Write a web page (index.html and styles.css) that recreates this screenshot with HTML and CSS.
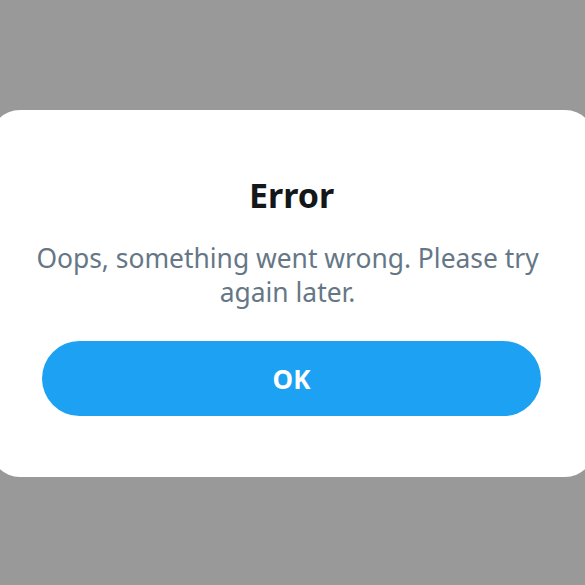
FILE: index.html
```html
<!DOCTYPE html>
<html lang="en">
<head>
  <meta charset="UTF-8">
  <meta name="viewport" content="width=device-width, initial-scale=1.0">
  <title>Error</title>
  <link rel="stylesheet" href="styles.css">
</head>
<body>
  <div class="overlay">
    <div class="dialog">
      <h1 class="title">Error</h1>
      <p class="message">Oops, something went wrong. Please try again later.</p>
      <button class="okbtn">OK</button>
    </div>
  </div>
</body>
</html>
```

FILE: styles.css
```css
body {
  margin: 0;
  background-color: #999999;
  font-family: "Noto Sans", "Open Sans", sans-serif;
}
.overlay {
  height: 585px;
  display: flex;
  justify-content: center;
  align-items: flex-start;
  overflow: hidden;
}
.dialog {
  flex: none;
  width: 605px;
  height: 367px;
  margin-top: 110px;
  box-sizing: border-box;
  padding: 60px 54px 0 52px;
  background-color: #ffffff;
  border-radius: 30px;
  display: flex;
  flex-direction: column;
  align-items: center;
}
.title {
  margin: 0;
  font-size: 34px;
  line-height: 50px;
  font-weight: 700;
  color: #14171a;
}
.message {
  margin: 21px -10px 0 -18px;
  font-size: 26.4px;
  line-height: 34px;
  text-align: center;
  color: #657786;
}
.okbtn {
  margin-top: 32px;
  width: 100%;
  height: 75px;
  border: none;
  border-radius: 38px;
  background-color: #1da1f2;
  color: #ffffff;
  font-family: inherit;
  font-size: 26px;
  font-weight: 700;
  cursor: pointer;
}
```
